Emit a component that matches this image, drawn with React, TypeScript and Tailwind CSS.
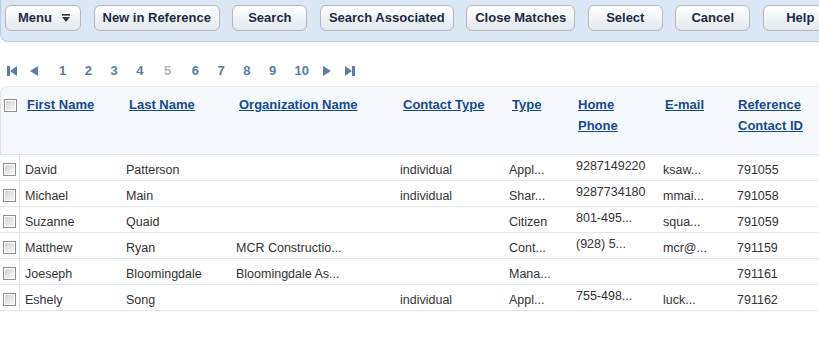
import React from "react";

const BUTTONS = ["New in Reference", "Search", "Search Associated", "Close Matches", "Select", "Cancel", "Help"];

const PAGES = ["1", "2", "3", "4", "5", "6", "7", "8", "9", "10"];

const COLS = "grid grid-cols-[20px_102px_110px_164px_109px_67px_87px_74px_1fr]";

type Row = {
  first: string;
  last: string;
  org: string;
  contactType: string;
  type: string;
  phone: string;
  email: string;
  id: string;
};

const ROWS: Row[] = [
  { first: "David", last: "Patterson", org: "", contactType: "individual", type: "Appl...", phone: "9287149220", email: "ksaw...", id: "791055" },
  { first: "Michael", last: "Main", org: "", contactType: "individual", type: "Shar...", phone: "9287734180", email: "mmai...", id: "791058" },
  { first: "Suzanne", last: "Quaid", org: "", contactType: "", type: "Citizen", phone: "801-495...", email: "squa...", id: "791059" },
  { first: "Matthew", last: "Ryan", org: "MCR Constructio...", contactType: "", type: "Cont...", phone: "(928) 5...", email: "mcr@...", id: "791159" },
  { first: "Joeseph", last: "Bloomingdale", org: "Bloomingdale As...", contactType: "", type: "Mana...", phone: "", email: "", id: "791161" },
  { first: "Eshely", last: "Song", org: "", contactType: "individual", type: "Appl...", phone: "755-498...", email: "luck...", id: "791162" },
];

function Checkbox() {
  return (
    <span className="block w-[13px] h-[13px] border border-[#8d8e8f] bg-white p-[1px]">
      <span className="block w-full h-full bg-gradient-to-br from-[#d4d5d7] to-[#f6f6f6]" />
    </span>
  );
}

function ToolButton({ children }: { children: React.ReactNode }) {
  return (
    <button className="flex-none h-[26px] min-w-[75px] px-[8px] rounded-[6px] border border-[#b4b6b9] bg-gradient-to-b from-white to-[#e3e9f0] text-[13px] font-bold text-[#1d2a44] whitespace-nowrap flex items-center justify-center">
      {children}
    </button>
  );
}

function PagerIcon({ dir, bar }: { dir: "left" | "right"; bar?: boolean }) {
  if (dir === "left") {
    return (
      <svg width={bar ? 10 : 8} height="10" viewBox={bar ? "0 0 10 10" : "0 0 8 10"} className="flex-none">
        {bar && <rect x="0" y="0" width="3" height="10" fill="#5a7ea6" />}
        <polygon points={bar ? "10,0 3,5 10,10" : "8,0 0,5 8,10"} fill="#5a7ea6" />
      </svg>
    );
  }
  return (
    <svg width={bar ? 10 : 8} height="10" viewBox={bar ? "0 0 10 10" : "0 0 8 10"} className="flex-none">
      <polygon points={bar ? "0,0 7,5 0,10" : "0,0 8,5 0,10"} fill="#5a7ea6" />
      {bar && <rect x="7" y="0" width="3" height="10" fill="#5a7ea6" />}
    </svg>
  );
}

export default function App() {
  return (
    <div className="w-[819px] h-[337px] overflow-hidden bg-white font-['Liberation_Sans',Arial,sans-serif]">
      {/* toolbar */}
      <div className="h-[42px] flex items-start gap-[12.5px] pl-[4px] pt-[5px] bg-[#dbe7f4] border-b border-l border-[#b7cce6] rounded-bl-[8px] whitespace-nowrap">
        <button className="flex-none h-[26px] w-[76px] pl-[12px] pr-[10px] rounded-[6px] border border-[#b4b6b9] bg-gradient-to-b from-white to-[#e3e9f0] text-[13px] font-bold text-[#1d2a44] flex items-center justify-between">
          Menu
          <svg width="8" height="8" viewBox="0 0 8 8">
            <rect x="0" y="0" width="8" height="1.6" fill="#333" />
            <polygon points="0,3 8,3 4,8" fill="#333" />
          </svg>
        </button>
        {BUTTONS.map((b) => (
          <ToolButton key={b}>{b}</ToolButton>
        ))}
      </div>

      {/* pager */}
      <div className="h-[44px] pt-[14px] flex items-center pl-[7px] text-[13px] font-bold text-[#5a7ea6]">
        <PagerIcon dir="left" bar />
        <span className="ml-[13px] flex">
          <PagerIcon dir="left" />
        </span>
        <div className="ml-[21px] flex items-center gap-[18.5px]">
          {PAGES.map((p) =>
            p === "5" ? (
              <span key={p} className="mx-[2px] text-[#b4b4b4]">
                {p}
              </span>
            ) : (
              <span key={p}>{p}</span>
            )
          )}
        </div>
        <span className="ml-[14px] flex">
          <PagerIcon dir="right" />
        </span>
        <span className="ml-[14px] flex">
          <PagerIcon dir="right" bar />
        </span>
      </div>

      {/* table */}
      <div>
        <div className={`${COLS} h-[69px] bg-[#f5f9fd] border-t border-l border-b border-[#dce6f1] rounded-tl-[8px] text-[13px] font-bold text-[#154a8b] leading-[21px]`}>
          <div className="pl-[3px] pt-[12px]">
            <Checkbox />
          </div>
          <div className="pl-[6px] pt-[7px]"><span className="underline">First Name</span></div>
          <div className="pl-[6px] pt-[7px]"><span className="underline">Last Name</span></div>
          <div className="pl-[6px] pt-[7px]"><span className="underline">Organization Name</span></div>
          <div className="pl-[6px] pt-[7px]"><span className="underline">Contact Type</span></div>
          <div className="pl-[6px] pt-[7px]"><span className="underline">Type</span></div>
          <div className="pl-[5px] pt-[7px]">
            <span className="underline">Home</span>
            <br />
            <span className="underline">Phone</span>
          </div>
          <div className="pl-[5px] pt-[7px]"><span className="underline">E-mail</span></div>
          <div className="pl-[4px] pt-[7px]">
            <span className="underline">Reference</span>
            <br />
            <span className="underline">Contact ID</span>
          </div>
        </div>

        {ROWS.map((r) => (
          <div key={r.id} className={`${COLS} h-[26px] border-b border-[#e2e7ec] text-[12.5px] text-[#333] leading-[15px] whitespace-nowrap`}>
            <div className="pl-[3px] pt-[8px] border-r border-[#d6e3f0]">
              <Checkbox />
            </div>
            <div className="pl-[5px] pt-[8px]">{r.first}</div>
            <div className="pl-[4px] pt-[8px]">{r.last}</div>
            <div className="pl-[4px] pt-[8px]">{r.org}</div>
            <div className="pl-[4px] pt-[8px]">{r.contactType}</div>
            <div className="pl-[4px] pt-[8px]">{r.type}</div>
            <div className="pl-[4px] pt-[4px]">{r.phone}</div>
            <div className="pl-[4px] pt-[8px]">{r.email}</div>
            <div className="pl-[4px] pt-[8px]">{r.id}</div>
          </div>
        ))}
      </div>
    </div>
  );
}
